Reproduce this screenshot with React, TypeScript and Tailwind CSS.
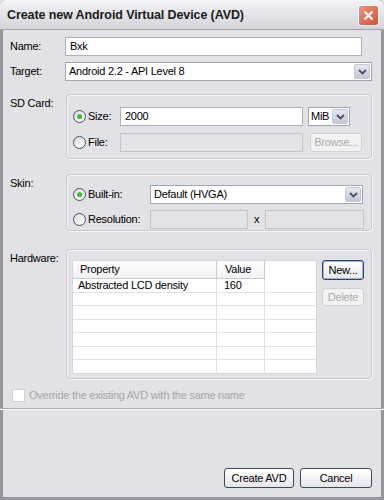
import { ReactNode } from 'react';

const font = { fontFamily: '"Liberation Sans", Arial, sans-serif' };

function Radio({ checked }: { checked?: boolean }) {
  return (
    <span className="relative inline-flex h-[13px] w-[13px] shrink-0 items-center justify-center rounded-full border border-[#3c5270] bg-gradient-to-br from-[#dcdcd8] to-white">
      {checked && (
        <span className="h-[5px] w-[5px] rounded-full bg-gradient-to-br from-[#55d051] to-[#20a21d]" />
      )}
    </span>
  );
}

function Chevron() {
  return (
    <svg width="9" height="6" viewBox="0 0 9 6">
      <path d="M1 1 L4.5 4.5 L8 1" fill="none" stroke="#4a5060" strokeWidth="1.8" />
    </svg>
  );
}

function ComboBtn() {
  return (
    <span className="flex h-full w-[16px] shrink-0 items-center justify-center rounded-[2px] border border-[#c2c8d6] bg-gradient-to-b from-[#e4e8f2] to-[#c3c9d9]">
      <Chevron />
    </span>
  );
}

function Select({ value, className }: { value: string; className: string }) {
  return (
    <div
      className={`flex h-[19px] items-center border border-[#9da7b4] bg-white pl-[3px] pr-[1px] py-[1px] ${className}`}
    >
      <span className="flex-1 truncate text-black">{value}</span>
      <ComboBtn />
    </div>
  );
}

function TextBox({
  value,
  disabled,
  className,
}: {
  value?: string;
  disabled?: boolean;
  className: string;
}) {
  return (
    <div
      className={`flex h-[19px] items-center border px-[4px] ${
        disabled ? 'border-[#c4c4c8] bg-[#e3e2e7]' : 'border-[#aab1ba] bg-white'
      } ${className}`}
    >
      {value}
    </div>
  );
}

function Button({
  children,
  disabled,
  focused,
  className,
}: {
  children: ReactNode;
  disabled?: boolean;
  focused?: boolean;
  className: string;
}) {
  return (
    <div
      className={`flex items-center justify-center rounded-[3px] border ${
        disabled
          ? 'border-[#cdd0d6] bg-[#f2f2f2] text-[#a9a9ad]'
          : focused
            ? 'border-[#30456a] bg-gradient-to-b from-white to-[#e6e7ec] text-black shadow-[inset_0_0_0_1px_#9fb0d0]'
            : 'border-[#3b4a62] bg-gradient-to-b from-white to-[#e6e6ea] text-black'
      } ${className}`}
    >
      {children}
    </div>
  );
}

function Group({ className, children }: { className: string; children: ReactNode }) {
  return (
    <div
      className={`rounded-[4px] border border-[#c7c6cc] shadow-[inset_1px_1px_0_#f7f7f9,1px_1px_0_#f7f7f9] ${className}`}
    >
      {children}
    </div>
  );
}

export default function App() {
  const rows = Array.from({ length: 7 });
  return (
    <div
      style={font}
      className="h-[500px] w-[384px] overflow-hidden bg-[#e2e1e6] text-[11px] tracking-[-0.25px] text-black"
    >
      <div className="flex h-full flex-col rounded-t-[6px] border-x-[3px] border-b-[3px] border-[#96959e]">
        {/* title bar */}
        <div className="-mx-[3px] flex h-[30px] shrink-0 items-center rounded-t-[6px] border-b border-[#a4a3ab] bg-gradient-to-b from-[#f4f4f6] via-[#e3e3e8] to-[#d4d3da] pl-[7px] pr-[5px] pt-[2px]">
          <span className="flex-1 text-[12.5px] font-bold tracking-[-0.1px] text-[#1c1c1c]">
            Create new Android Virtual Device (AVD)
          </span>
          <span className="flex h-[21px] w-[21px] items-center justify-center rounded-[3px] border border-white bg-gradient-to-br from-[#ec9480] to-[#cf5236]">
            <svg width="11" height="11" viewBox="0 0 11 11">
              <path d="M1.5 1.5 L9.5 9.5 M9.5 1.5 L1.5 9.5" stroke="white" strokeWidth="2" />
            </svg>
          </span>
        </div>

        <div className="flex shrink-0 flex-col pl-[7px] pr-[9px]">
          {/* Name */}
          <div className="mt-[7px] flex items-center">
            <span className="w-[55px]">Name:</span>
            <TextBox value="Bxk" className="w-[297px]" />
          </div>
          {/* Target */}
          <div className="mt-[6px] flex items-center">
            <span className="w-[55px]">Target:</span>
            <Select value="Android 2.2 - API Level 8" className="w-[307px]" />
          </div>

          {/* SD Card */}
          <div className="mt-[13px] flex">
            <span className="w-[56px] pt-[1px]">SD Card:</span>
            <Group className="flex h-[65px] w-[306px] flex-col px-[6px] pt-[12px]">
              <div className="flex items-center">
                <span className="flex w-[47px] items-center gap-[2px]">
                  <Radio checked />
                  Size:
                </span>
                <TextBox value="2000" className="w-[183px]" />
                <div className="ml-[5px] flex h-[19px] w-[42px] items-center border border-[#9da7b4] bg-white pl-[2px] pr-[1px] py-[1px]">
                  <span className="flex-1">MiB</span>
                  <ComboBtn />
                </div>
              </div>
              <div className="mt-[7px] flex items-center">
                <span className="flex w-[47px] items-center gap-[2px]">
                  <Radio />
                  File:
                </span>
                <TextBox disabled className="w-[183px]" />
                <Button disabled className="ml-[7px] h-[19px] w-[52px]">
                  Browse...
                </Button>
              </div>
            </Group>
          </div>

          {/* Skin */}
          <div className="mt-[15px] flex">
            <span className="w-[56px] pt-[1px]">Skin:</span>
            <Group className="flex h-[57px] w-[306px] flex-col px-[6px] pt-[10px]">
              <div className="flex items-center">
                <span className="flex w-[77px] items-center gap-[2px]">
                  <Radio checked />
                  Built-in:
                </span>
                <Select value="Default (HVGA)" className="w-[213px]" />
              </div>
              <div className="mt-[6px] flex items-center">
                <span className="flex w-[77px] items-center gap-[2px]">
                  <Radio />
                  Resolution:
                </span>
                <TextBox disabled className="h-[18px] w-[98px]" />
                <span className="w-[17px] text-center">x</span>
                <TextBox disabled className="h-[18px] w-[99px]" />
              </div>
            </Group>
          </div>

          {/* Hardware */}
          <div className="mt-[18px] flex">
            <span className="w-[56px] pt-[1px]">Hardware:</span>
            <Group className="flex h-[130px] w-[306px] gap-[5px] px-[5px] pt-[10px]">
              <div className="flex h-[114px] w-[245px] flex-col border border-[#d6d6da] bg-white">
                <div className="flex h-[18px] shrink-0 items-stretch">
                  <div className="flex w-[144px] items-center border-b border-r border-[#c9c9ce] bg-gradient-to-b from-white to-[#f1f1f3] pl-[7px]">
                    Property
                  </div>
                  <div className="flex w-[48px] items-center border-b border-r border-[#c9c9ce] bg-gradient-to-b from-white to-[#f1f1f3] pl-[8px]">
                    Value
                  </div>
                </div>
                {rows.map((_, i) => (
                  <div key={i} className="flex h-[13.5px] shrink-0 items-center border-b border-[#e1e1e4] last:border-b-0">
                    <div className="flex h-full w-[144px] items-center border-r border-[#e1e1e4] pl-[5px]">
                      {i === 0 ? 'Abstracted LCD density' : ''}
                    </div>
                    <div className="flex h-full w-[48px] items-center border-r border-[#e1e1e4] pl-[7px]">
                      {i === 0 ? '160' : ''}
                    </div>
                  </div>
                ))}
              </div>
              <div className="flex flex-col gap-[8px]">
                <Button focused className="h-[20px] w-[42px]">
                  New...
                </Button>
                <Button disabled className="h-[18px] w-[42px]">
                  Delete
                </Button>
              </div>
            </Group>
          </div>

          {/* Override */}
          <div className="mt-[8px] flex items-center gap-[4px] pl-[2px] text-[#a5a5aa]">
            <span className="h-[13px] w-[13px] border border-[#cfcfd4] bg-white" />
            Override the existing AVD with the same name
          </div>
        </div>

        <div className="-mx-[3px] mt-[4px] h-[2px] shrink-0 border-y border-t-[#a9a8b0] border-b-[#f8f8fa]" />

        <div className="flex flex-1 items-end justify-end gap-[6px] pb-[9px] pr-[9px]">
          <Button className="h-[20px] w-[70px]">Create AVD</Button>
          <Button className="h-[20px] w-[72px]">Cancel</Button>
        </div>
      </div>
    </div>
  );
}
